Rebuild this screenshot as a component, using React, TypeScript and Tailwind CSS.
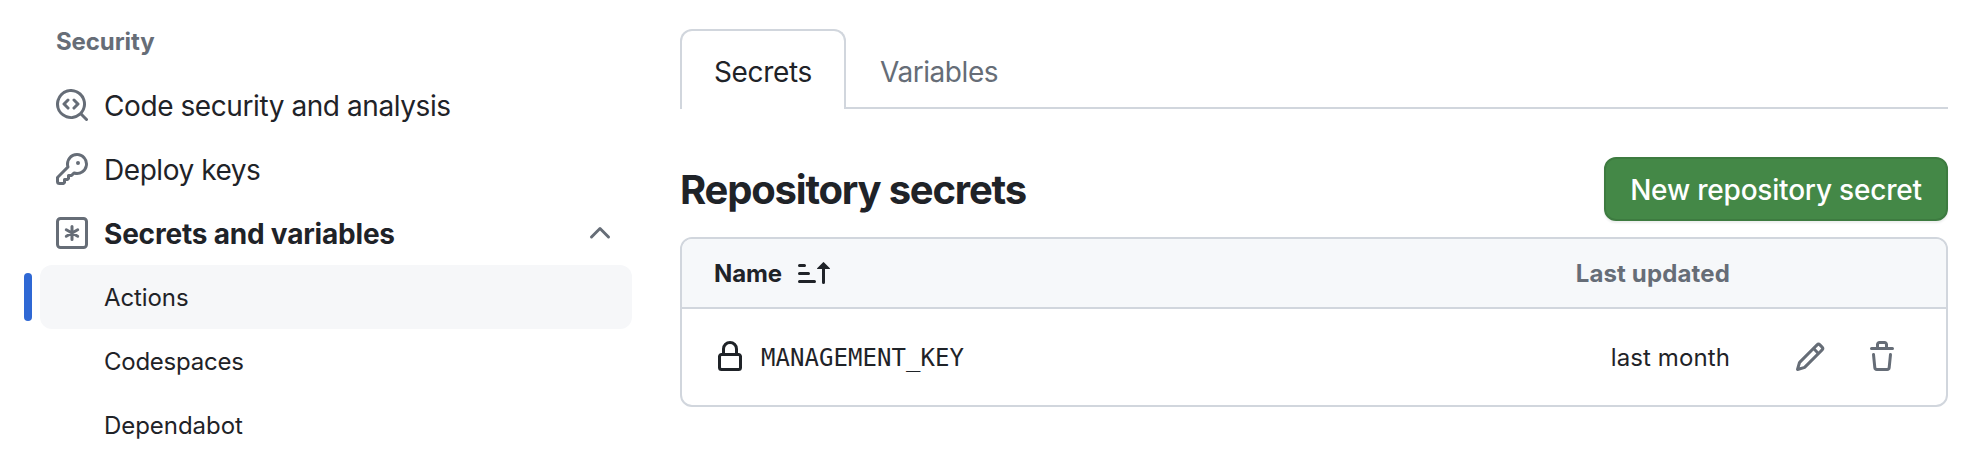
import type { ReactNode } from "react";

const paths = {
  codescan:
    "M8.47 4.97a.75.75 0 0 0 0 1.06L9.94 7.5 8.47 8.97a.75.75 0 1 0 1.06 1.06l2-2a.75.75 0 0 0 0-1.06l-2-2a.75.75 0 0 0-1.06 0ZM6.53 6.03a.75.75 0 0 0-1.06-1.06l-2 2a.75.75 0 0 0 0 1.06l2 2a.75.75 0 1 0 1.06-1.06L5.06 7.5l1.47-1.47ZM12.246 13.307a7.501 7.501 0 1 1 1.06-1.06l2.474 2.473a.749.749 0 1 1-1.06 1.06l-2.474-2.473ZM1.5 7.5a6.002 6.002 0 0 0 3.608 5.504 6.002 6.002 0 0 0 6.486-1.117.748.748 0 0 1 .292-.293A6 6 0 1 0 1.5 7.5Z",
  key: "M10.5 0a5.499 5.499 0 1 1-1.288 10.848l-.932.932a.749.749 0 0 1-.53.22H7v.75a.749.749 0 0 1-.22.53l-.5.5a.749.749 0 0 1-.53.22H5v.75a.749.749 0 0 1-.22.53l-.5.5a.749.749 0 0 1-.53.22h-2A1.75 1.75 0 0 1 0 14.25v-2c0-.199.079-.389.22-.53l4.932-4.932A5.5 5.5 0 0 1 10.5 0Zm-4 5.5c-.001.431.069.86.205 1.269a.75.75 0 0 1-.181.768L1.5 12.56v1.69c0 .138.112.25.25.25h1.69l.06-.06v-1.19a.75.75 0 0 1 .75-.75h1.19l.06-.06v-1.19a.75.75 0 0 1 .75-.75h1.19l1.023-1.025a.75.75 0 0 1 .768-.18A4 4 0 1 0 6.5 5.5ZM11 6a1 1 0 1 1 0-2 1 1 0 0 1 0 2Z",
  chevronUp:
    "M3.22 10.53a.749.749 0 0 1 0-1.06l4.25-4.25a.749.749 0 0 1 1.06 0l4.25 4.25a.749.749 0 1 1-1.06 1.06L8 6.811 4.28 10.53a.749.749 0 0 1-1.06 0Z",
  sortAsc:
    "m12.927 2.573 3 3A.25.25 0 0 1 15.75 6H13.5v6.75a.75.75 0 0 1-1.5 0V6H9.75a.25.25 0 0 1-.177-.427l3-3a.25.25 0 0 1 .354 0ZM0 12.25a.75.75 0 0 1 .75-.75h7.5a.75.75 0 0 1 0 1.5H.75a.75.75 0 0 1-.75-.75Zm0-4a.75.75 0 0 1 .75-.75h4.5a.75.75 0 0 1 0 1.5H.75A.75.75 0 0 1 0 8.25Zm0-4a.75.75 0 0 1 .75-.75h2.5a.75.75 0 0 1 0 1.5H.75A.75.75 0 0 1 0 4.25Z",
  lock: "M4 4a4 4 0 0 1 8 0v2h.25c.966 0 1.75.784 1.75 1.75v5.5A1.75 1.75 0 0 1 12.25 15h-8.5A1.75 1.75 0 0 1 2 13.25v-5.5C2 6.784 2.784 6 3.75 6H4Zm8.25 3.5h-8.5a.25.25 0 0 0-.25.25v5.5c0 .138.112.25.25.25h8.5a.25.25 0 0 0 .25-.25v-5.5a.25.25 0 0 0-.25-.25ZM10.5 6V4a2.5 2.5 0 1 0-5 0v2Z",
  pencil:
    "M11.013 1.427a1.75 1.75 0 0 1 2.474 0l1.086 1.086a1.75 1.75 0 0 1 0 2.474l-8.61 8.61c-.21.21-.47.364-.756.445l-3.251.93a.75.75 0 0 1-.927-.928l.929-3.25c.081-.286.235-.547.445-.758l8.61-8.61Zm.176 4.823L9.75 4.81l-6.286 6.287a.253.253 0 0 0-.064.108l-.558 1.953 1.953-.558a.253.253 0 0 0 .108-.064Zm1.238-3.763a.25.25 0 0 0-.354 0L10.811 3.75l1.439 1.44 1.263-1.263a.25.25 0 0 0 0-.354Z",
  trash:
    "M11 1.75V3h2.25a.75.75 0 0 1 0 1.5H2.75a.75.75 0 0 1 0-1.5H5V1.75C5 .784 5.784 0 6.75 0h2.5C10.216 0 11 .784 11 1.75ZM4.496 6.675l.66 6.6a.25.25 0 0 0 .249.225h5.19a.25.25 0 0 0 .249-.225l.66-6.6a.75.75 0 0 1 1.492.149l-.66 6.6A1.748 1.748 0 0 1 10.595 15h-5.19a1.75 1.75 0 0 1-1.741-1.575l-.66-6.6a.75.75 0 1 1 1.492-.15ZM6.5 1.75V3h3V1.75a.25.25 0 0 0-.25-.25h-2.5a.25.25 0 0 0-.25.25Z",
};

function Icon({ name }: { name: keyof typeof paths }) {
  return (
    <svg viewBox="0 0 16 16" className="size-8 shrink-0 fill-current" aria-hidden="true">
      <path d={paths[name]} />
    </svg>
  );
}

function AsteriskBox() {
  return (
    <svg viewBox="0 0 16 16" className="size-8 shrink-0 fill-none stroke-current" strokeWidth="1.5" aria-hidden="true">
      <rect x="0.75" y="0.75" width="14.5" height="14.5" rx="1.5" />
      <path d="M8 4.75v6.5M5.15 6.4l5.7 3.2M10.85 6.4l-5.7 3.2" strokeLinecap="round" />
    </svg>
  );
}

function NavItem({ icon, children }: { icon: ReactNode; children: ReactNode }) {
  return (
    <a className="flex h-16 items-center gap-4 px-4">
      <span className="text-[#666d77]">{icon}</span>
      {children}
    </a>
  );
}

function SubItem({ children, active = false }: { children: ReactNode; active?: boolean }) {
  return (
    <a className={active ? "relative flex h-16 items-center rounded-xl bg-[#f6f7f9] pt-0.5 pl-16 text-2xl" : "flex h-16 items-center pt-0.5 pl-16 text-2xl"}>
      {active && <span className="absolute top-2 -left-4 h-12 w-2 rounded-full bg-[#2f68d4]" />}
      {children}
    </a>
  );
}

export default function App() {
  return (
    <div className="flex h-[454px] w-[1978px] overflow-hidden bg-white pl-10 font-['Inter',sans-serif] text-[28px] leading-10 text-[#1f2328]">
      <nav className="w-[592px] shrink-0 pt-[22px]">
        <h3 className="mb-[11px] px-4 text-2xl leading-10 font-[650] tracking-[-0.1px] text-[#666d77]">Security</h3>
        <NavItem icon={<Icon name="codescan" />}>
          <span className="pt-0.5 tracking-[-0.42px]">Code security and analysis</span>
        </NavItem>
        <NavItem icon={<Icon name="key" />}>
          <span className="pt-0.5 tracking-[-0.45px]">Deploy keys</span>
        </NavItem>
        <NavItem icon={<AsteriskBox />}>
          <span className="grow pt-0.5 font-[650] tracking-[-0.2px]">Secrets and variables</span>
          <span className="text-[#666d77]">
            <Icon name="chevronUp" />
          </span>
        </NavItem>
        <SubItem active>
          <span className="tracking-[-0.1px]">Actions</span>
        </SubItem>
        <SubItem>
          <span className="tracking-[-0.25px]">Codespaces</span>
        </SubItem>
        <SubItem>
          <span className="tracking-[-0.05px]">Dependabot</span>
        </SubItem>
      </nav>

      <main className="ml-12 w-[1268px] pt-[29px]">
        <div className="flex h-20">
          <div className="flex w-[166px] items-center rounded-t-xl border-2 border-b-0 border-[#d1d6dd] pt-1 pl-8">
            <span className="tracking-[-0.35px]">Secrets</span>
          </div>
          <div className="flex grow items-center border-b-2 border-[#d1d6dd] pt-2 pl-[34px] text-[#666d77]">
            <span className="tracking-[-0.45px]">Variables</span>
          </div>
        </div>

        <div className="mt-12 flex h-16 items-center justify-between">
          <h2 className="pt-0.5 text-[40px] leading-[60px] font-[650] tracking-[-1.2px]">
            <span>Repository secrets</span>
          </h2>
          <button className="flex h-16 w-[344px] items-center justify-center rounded-xl border-2 border-[#3d7b40] bg-[#448847] pt-0.5 font-medium tracking-[-0.2px] text-white shadow-[0_2px_2px_rgba(31,35,40,0.08)]">
            <span>New repository secret</span>
          </button>
        </div>

        <section className="mt-4 h-[170px] overflow-hidden rounded-xl border-2 border-[#d1d6dd]">
          <div className="flex h-[70px] items-center border-b-2 border-[#d1d6dd] bg-[#f6f8fa] pl-8 text-2xl font-[650]">
            <span className="w-[84px] pt-0.5 tracking-[-0.1px]">Name</span>
            <Icon name="sortAsc" />
            <span className="ml-auto pt-0.5 pr-[216px] tracking-[0.15px] text-[#666d77]">Last updated</span>
          </div>
          <div className="flex h-24 items-center pl-8 text-2xl">
            <Icon name="lock" />
            <span className="ml-[15px] pt-0.5 font-['DejaVu_Sans_Mono',monospace] tracking-[0.05px]">MANAGEMENT_KEY</span>
            <span className="ml-auto pt-0.5 tracking-[0.1px]">last month</span>
            <div className="ml-16 flex gap-10 pr-12 text-[#666d77]">
              <Icon name="pencil" />
              <Icon name="trash" />
            </div>
          </div>
        </section>
      </main>
    </div>
  );
}
